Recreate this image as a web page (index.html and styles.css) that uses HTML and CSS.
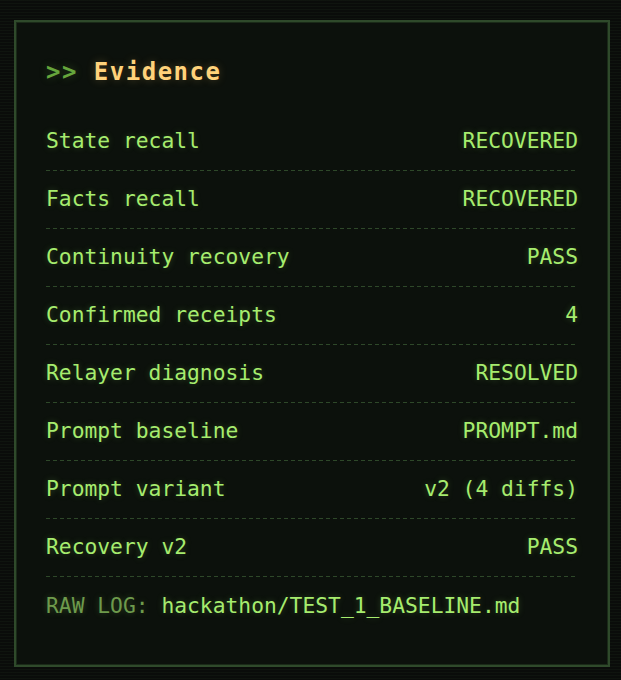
FILE: index.html
```html
<!DOCTYPE html>
<html lang="en">
<head>
    <meta charset="UTF-8">
    <meta name="viewport" content="width=device-width, initial-scale=1.0">
    <title>Evidence</title>
    <link rel="stylesheet" href="styles.css">
</head>
<body>
    <section class="panel">
        <h2 class="panel-title"><span class="prompt">&gt;&gt;</span> Evidence</h2>

        <div class="rows">
            <div class="row"><span>State recall</span><span>RECOVERED</span></div>
            <div class="row"><span>Facts recall</span><span>RECOVERED</span></div>
            <div class="row"><span>Continuity recovery</span><span>PASS</span></div>
            <div class="row"><span>Confirmed receipts</span><span>4</span></div>
            <div class="row"><span>Relayer diagnosis</span><span>RESOLVED</span></div>
            <div class="row"><span>Prompt baseline</span><span>PROMPT.md</span></div>
            <div class="row"><span>Prompt variant</span><span>v2 (4 diffs)</span></div>
            <div class="row"><span>Recovery v2</span><span>PASS</span></div>
        </div>

        <p class="raw-log"><span class="dim">RAW LOG:</span> hackathon/TEST_1_BASELINE.md</p>
    </section>
</body>
</html>
```

FILE: styles.css
```css
* {
    margin: 0;
    padding: 0;
    box-sizing: border-box;
}

body {
    font-family: "DejaVu Sans Mono", "Liberation Mono", monospace;
    background-color: #0a0c0a;
    background-image: repeating-linear-gradient(180deg, rgba(60, 90, 55, 0.10) 0 1px, transparent 1px 3px);
    height: 680px;
    padding: 20px 11px 0 14px;
}

.panel {
    height: 647px;
    background: #0c110c;
    border: 2px solid #2f4a2b;
    box-shadow: inset 0 0 0 1px #1a2a18;
    padding: 35px 30px 0 30px;
}

.panel-title {
    font-size: 24px;
    line-height: 30px;
    font-weight: bold;
    letter-spacing: 1.5px;
    color: #ffd27a;
    text-shadow: 0 0 8px rgba(255, 200, 100, 0.25);
    margin-bottom: 26px;
}

.panel-title .prompt {
    color: #66a63c;
    text-shadow: 0 0 8px rgba(100, 170, 60, 0.3);
}

.row {
    display: flex;
    justify-content: space-between;
    font-size: 21.3px;
    line-height: 25px;
    padding: 15px 0 18px;
    color: #a6ec6e;
    text-shadow: 0 0 6px rgba(150, 230, 100, 0.25);
    background: linear-gradient(to right, #2e4829 4px, transparent 4px) left bottom / 7px 1px repeat-x;
}

.raw-log {
    font-size: 21.3px;
    line-height: 25px;
    padding-top: 16px;
    color: #a6ec6e;
    text-shadow: 0 0 6px rgba(150, 230, 100, 0.25);
}

.raw-log .dim {
    color: #6e9a4c;
}
```
